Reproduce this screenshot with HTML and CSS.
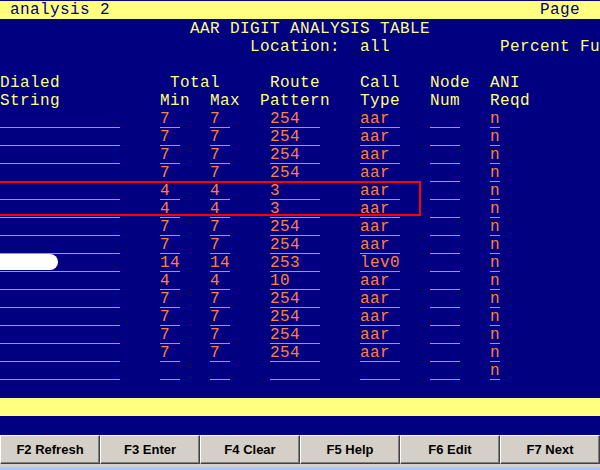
FILE: index.html
```html
<!DOCTYPE html>
<html>
<head>
<meta charset="utf-8">
<title>AAR Digit Analysis Table</title>
<link rel="stylesheet" href="styles.css">
</head>
<body>
<div class="screen">
  <div class="bar bar-top">
    <div class="line">
      <span class="t-title">analysis 2</span>
      <span class="t-page">Page</span>
    </div>
  </div>
  <div class="rows">
    <div class="line"><span class="t-heading">AAR DIGIT ANALYSIS TABLE</span></div>
    <div class="line"><span class="t-loc">Location:  all</span><span class="t-pct">Percent Fu</span></div>
    <div class="line"></div>
    <div class="line">
      <span class="h-ds">Dialed</span><span class="h-total">Total</span><span class="h-route">Route</span>
      <span class="h-ct">Call</span><span class="h-nn">Node</span><span class="h-an">ANI</span>
    </div>
    <div class="line">
      <span class="h-ds">String</span><span class="h-min">Min</span><span class="h-max">Max</span><span class="h-pat">Pattern</span>
      <span class="h-ct">Type</span><span class="h-nn">Num</span><span class="h-an">Reqd</span>
    </div>

    <div class="line"><span class="f ds"></span><span class="f mn">7</span><span class="f mx">7</span><span class="f rp">254</span><span class="f ct">aar</span><span class="f nn"></span><span class="f an">n</span></div>
    <div class="line"><span class="f ds"></span><span class="f mn">7</span><span class="f mx">7</span><span class="f rp">254</span><span class="f ct">aar</span><span class="f nn"></span><span class="f an">n</span></div>
    <div class="line"><span class="f ds"></span><span class="f mn">7</span><span class="f mx">7</span><span class="f rp">254</span><span class="f ct">aar</span><span class="f nn"></span><span class="f an">n</span></div>
    <div class="line"><span class="f ds"></span><span class="f mn">7</span><span class="f mx">7</span><span class="f rp">254</span><span class="f ct">aar</span><span class="f nn"></span><span class="f an">n</span></div>
    <div class="line"><span class="f ds"></span><span class="f mn">4</span><span class="f mx">4</span><span class="f rp">3</span><span class="f ct">aar</span><span class="f nn"></span><span class="f an">n</span></div>
    <div class="line"><span class="f ds"></span><span class="f mn">4</span><span class="f mx">4</span><span class="f rp">3</span><span class="f ct">aar</span><span class="f nn"></span><span class="f an">n</span></div>
    <div class="line"><span class="f ds"></span><span class="f mn">7</span><span class="f mx">7</span><span class="f rp">254</span><span class="f ct">aar</span><span class="f nn"></span><span class="f an">n</span></div>
    <div class="line"><span class="f ds"></span><span class="f mn">7</span><span class="f mx">7</span><span class="f rp">254</span><span class="f ct">aar</span><span class="f nn"></span><span class="f an">n</span></div>
    <div class="line"><span class="f ds"><span class="blob"></span></span><span class="f mn">14</span><span class="f mx">14</span><span class="f rp">253</span><span class="f ct">lev0</span><span class="f nn"></span><span class="f an">n</span></div>
    <div class="line"><span class="f ds"></span><span class="f mn">4</span><span class="f mx">4</span><span class="f rp">10</span><span class="f ct">aar</span><span class="f nn"></span><span class="f an">n</span></div>
    <div class="line"><span class="f ds"></span><span class="f mn">7</span><span class="f mx">7</span><span class="f rp">254</span><span class="f ct">aar</span><span class="f nn"></span><span class="f an">n</span></div>
    <div class="line"><span class="f ds"></span><span class="f mn">7</span><span class="f mx">7</span><span class="f rp">254</span><span class="f ct">aar</span><span class="f nn"></span><span class="f an">n</span></div>
    <div class="line"><span class="f ds"></span><span class="f mn">7</span><span class="f mx">7</span><span class="f rp">254</span><span class="f ct">aar</span><span class="f nn"></span><span class="f an">n</span></div>
    <div class="line"><span class="f ds"></span><span class="f mn">7</span><span class="f mx">7</span><span class="f rp">254</span><span class="f ct">aar</span><span class="f nn"></span><span class="f an">n</span></div>
    <div class="line"><span class="f ds"></span><span class="f mn"></span><span class="f mx"></span><span class="f rp"></span><span class="f ct"></span><span class="f nn"></span><span class="f an">n</span></div>
    <div class="line"></div>
  </div>
  <div class="bar bar-bottom"></div>
  <div class="highlight"></div>
</div>
<div class="keys">
  <div class="key">F2 Refresh</div>
  <div class="key">F3 Enter</div>
  <div class="key">F4 Clear</div>
  <div class="key">F5 Help</div>
  <div class="key">F6 Edit</div>
  <div class="key">F7 Next</div>
</div>
<div class="strip"></div>
</body>
</html>
```

FILE: styles.css
```css
html, body {
  margin: 0;
  padding: 0;
  width: 600px;
  height: 470px;
  overflow: hidden;
  background: #000080;
}

.screen {
  position: relative;
  height: 435px;
  padding-top: 1px;
  box-sizing: border-box;
  background: #000080;
  font-family: "Liberation Mono", "DejaVu Sans Mono", monospace;
  font-size: 16px;
  letter-spacing: 0.4px;
  color: #ffff80;
  overflow: hidden;
}

.bar {
  height: 18px;
  background: #ffff80;
  color: #000080;
}

.bar-top .line {
  height: 18px;
  line-height: 18px;
}

.rows {
  margin-top: 1px;
}

.line {
  display: grid;
  grid-template-columns: repeat(60, 10px);
  height: 18px;
  line-height: 18px;
  white-space: pre;
}

.line > span {
  grid-row: 1;
  white-space: pre;
}

.t-title { grid-column: 2 / span 10; }
.t-page { grid-column: 55 / span 4; }
.t-heading { grid-column: 20 / span 24; }
.t-loc { grid-column: 26 / span 14; }
.t-pct { grid-column: 51 / span 10; overflow: hidden; }

.h-ds { grid-column: 1 / span 6; }
.h-total { grid-column: 18 / span 5; }
.h-min { grid-column: 17 / span 3; }
.h-max { grid-column: 22 / span 3; }
.h-route { grid-column: 28 / span 5; }
.h-pat { grid-column: 27 / span 7; }
.h-ct { grid-column: 37 / span 4; }
.h-nn { grid-column: 44 / span 4; }
.h-an { grid-column: 50 / span 4; }

.f {
  color: #ff8040;
  height: 18px;
  box-sizing: border-box;
  border-bottom: 1px solid #ff8040;
}

.ds { grid-column: 1 / span 12; }
.mn { grid-column: 17 / span 2; }
.mx { grid-column: 22 / span 2; }
.rp { grid-column: 28 / span 5; }
.ct { grid-column: 37 / span 4; }
.nn { grid-column: 44 / span 3; }
.an { grid-column: 50 / span 1; }

.blob {
  display: block;
  width: 58px;
  height: 16px;
  background: #ffffff;
  border-radius: 0 8px 8px 0;
  filter: blur(0.5px);
}

.bar-bottom {
  margin-top: 0;
}

.highlight {
  position: absolute;
  top: 181px;
  left: -4px;
  width: 425px;
  height: 35px;
  box-sizing: border-box;
  border: 2px solid #ff0000;
  pointer-events: none;
}

.keys {
  display: grid;
  grid-template-columns: repeat(6, 100px);
  height: 29px;
}

.key {
  box-sizing: border-box;
  height: 29px;
  background: #d4d0c8;
  border-style: solid;
  border-width: 1px;
  border-color: #ffffff #404040 #404040 #ffffff;
  box-shadow: inset -1px -1px 0 #808080;
  display: flex;
  align-items: center;
  justify-content: center;
  font-family: "Liberation Sans", Arial, sans-serif;
  font-weight: bold;
  font-size: 13px;
  color: #000000;
}

.strip {
  height: 6px;
  background: linear-gradient(#d4d0c8 0 3px, #a6caf0 3px 6px);
}
```
